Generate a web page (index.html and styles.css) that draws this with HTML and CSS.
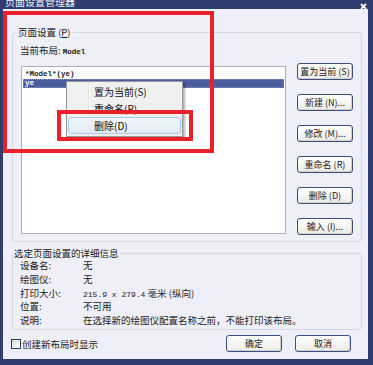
FILE: index.html
```html
<!DOCTYPE html>
<html>
<head>
    <title>页面设置管理器</title>
    <link rel="stylesheet" href="styles.css">
</head>
<body>
    <div class="window">
        <div class="titlebar">
            <span class="title">页面设置管理器</span>
            <svg class="close" width="7" height="7" viewBox="0 0 7 7">
                <path d="M1 1 L6 6 M6 1 L1 6" stroke="#ffffff" stroke-width="1.8"/>
            </svg>
        </div>

        <div class="frame">
            <!-- page setups -->
            <fieldset class="group group-setup">
                <legend>页面设置 (<u>P</u>)</legend>
                <div class="current">当前布局: <span class="mono">Model</span></div>
                <div class="setup-row">
                    <div class="listbox">
                        <div class="list-item mono">*Model*(ye)</div>
                        <div class="list-item mono selected">ye</div>
                    </div>
                    <div class="btn-col">
                        <button class="btn">置为当前 (<u>S</u>)</button>
                        <button class="btn">新建 (<u>N</u>)...</button>
                        <button class="btn">修改 (<u>M</u>)...</button>
                        <button class="btn">重命名 (<u>R</u>)</button>
                        <button class="btn">删除 (<u>D</u>)</button>
                        <button class="btn">输入 (<u>I</u>)...</button>
                    </div>
                </div>
            </fieldset>

            <!-- details -->
            <fieldset class="group group-details">
                <legend>选定页面设置的详细信息</legend>
                <div class="detail"><span class="detail-label">设备名:</span><span>无</span></div>
                <div class="detail"><span class="detail-label">绘图仪:</span><span>无</span></div>
                <div class="detail"><span class="detail-label">打印大小:</span><span><span class="num">215.9 x 279.4</span> 毫米 (纵向)</span></div>
                <div class="detail"><span class="detail-label">位置:</span><span>不可用</span></div>
                <div class="detail"><span class="detail-label">说明:</span><span>在选择新的绘图仪配置名称之前，不能打印该布局。</span></div>
            </fieldset>

            <div class="footer">
                <label class="check"><span class="checkbox"></span>创建新布局时显示</label>
                <div class="footer-btns">
                    <button class="btn btn-main">确定</button>
                    <button class="btn btn-main">取消</button>
                </div>
            </div>
        </div>

        <!-- context menu over the list -->
        <div class="menu">
            <div class="menu-item">置为当前(S)</div>
            <div class="menu-item">重命名(R)</div>
            <div class="menu-item active">删除(D)</div>
        </div>

        <!-- red annotation boxes -->
        <div class="mark mark-outer"></div>
        <div class="mark mark-inner"></div>
    </div>
</body>
</html>
```

FILE: styles.css
```css
body {
    margin: 0;
    font-family: 'Noto Sans CJK SC', 'Noto Sans', sans-serif;
    font-size: 9.5px;
    color: #1a1a1a;
}

.window {
    position: relative;
    width: 373px;
    height: 365px;
    overflow: hidden;
    background: #2f3e6e;
}

.titlebar {
    height: 9px;
    display: flex;
    justify-content: space-between;
    align-items: flex-start;
    overflow: hidden;
    background: #2f3e6e;
}

.title {
    color: #f2f4fa;
    font-size: 10px;
    line-height: 10px;
    margin: -3px 0 0 5px;
}

.close {
    margin: 3px 6px 0 0;
}

.frame {
    height: 350px;
    border-left: 3px solid #2f3e6e;
    border-right: 5px solid #2f3e6e;
    border-bottom: 6px solid #2f3e6e;
    background: #efeff9;
    display: flex;
    flex-direction: column;
}

.group {
    margin: 0 6px 0 9px;
    padding: 0;
    border: 1px solid #d6d6e2;
    border-radius: 3px;
    min-inline-size: 0;
}

.group legend {
    height: 12px;
    line-height: 12px;
    padding: 0 2px;
    margin-left: 3px;
}

.group-setup {
    margin-top: 17px;
    padding-bottom: 6px;
}

.current {
    height: 12px;
    margin: 6px 0 0 7px;
    line-height: 12px;
}

.mono {
    font-family: 'Liberation Mono', monospace;
    font-size: 7.5px;
    font-weight: bold;
    line-height: 1;
}

.num {
    font-family: 'Liberation Mono', monospace;
    font-size: 8px;
}

.setup-row {
    display: flex;
    align-items: flex-start;
    margin: 7px 0 0 8px;
    gap: 11px;
}

.listbox {
    width: 261px;
    height: 163px;
    margin-top: 3px;
    padding: 3px 1px 0;
    box-sizing: content-box;
    background: #ffffff;
    border: 1px solid #a9adbd;
}

.list-item {
    height: 9px;
    line-height: 9px;
    padding-left: 2px;
}

.list-item.selected {
    background: #4b5d9d;
    color: #ffffff;
    outline: 1px dotted #8a93b8;
    outline-offset: -1px;
}

.btn-col {
    display: flex;
    flex-direction: column;
    gap: 14px;
}

.btn {
    width: 56px;
    height: 17px;
    padding: 0;
    font-family: 'Noto Sans CJK SC', sans-serif;
    font-size: 9px;
    line-height: 15px;
    color: #1a1a1a;
    background: linear-gradient(#ffffff, #ecebe6);
    border: 1px solid #3a4d7e;
    border-radius: 3px;
    box-shadow: inset -1px -1px 0 #d6d0c5;
}

.btn u {
    text-decoration: none;
}

.group-details {
    margin-top: 5px;
    padding-bottom: 1px;
}

.group-details legend {
    margin-left: 0;
    padding: 0 1px;
}

.detail {
    display: flex;
    height: 13.8px;
    line-height: 13.8px;
    padding-left: 7px;
}

.detail-label {
    width: 63px;
}

.footer {
    display: flex;
    justify-content: space-between;
    align-items: center;
    margin: 5px 17px 0 8px;
}

.check {
    display: flex;
    align-items: center;
    gap: 1px;
    margin-top: 2px;
    line-height: 12px;
}

.checkbox {
    width: 8px;
    height: 8px;
    border: 1px solid #1c3f6e;
    background: linear-gradient(135deg, #dcdcd6, #ffffff);
}

.footer-btns {
    display: flex;
    gap: 13px;
}

.btn-main {
    border-color: #33508a;
}

.menu {
    position: absolute;
    left: 66px;
    top: 81px;
    width: 115px;
    padding: 1px 0 2px;
    background: linear-gradient(90deg, #f1f1f1 21px, #e2e3e3 21px, #e2e3e3 22px, #ffffff 22px, #ffffff 23px, #f0f0f0 23px);
    border: 1px solid #979797;
    box-shadow: 2px 2px 2px rgba(0,0,0,0.3);
}

.menu-item {
    height: 17px;
    line-height: 17px;
    padding-left: 26px;
    margin: 0 1px;
    font-size: 10px;
    color: #111111;
}

.menu-item.active {
    height: 15px;
    line-height: 15px;
    background: linear-gradient(#f2f6fb, #e0eaf6);
    border: 1px solid #a9c9ef;
    border-radius: 3px;
    padding-left: 25px;
}

.mark {
    position: absolute;
    border: 4px solid #e8212b;
}

.mark-outer {
    left: 3px;
    top: 11px;
    width: 203px;
    height: 134px;
}

.mark-inner {
    left: 57px;
    top: 110px;
    width: 128px;
    height: 23px;
}
```
